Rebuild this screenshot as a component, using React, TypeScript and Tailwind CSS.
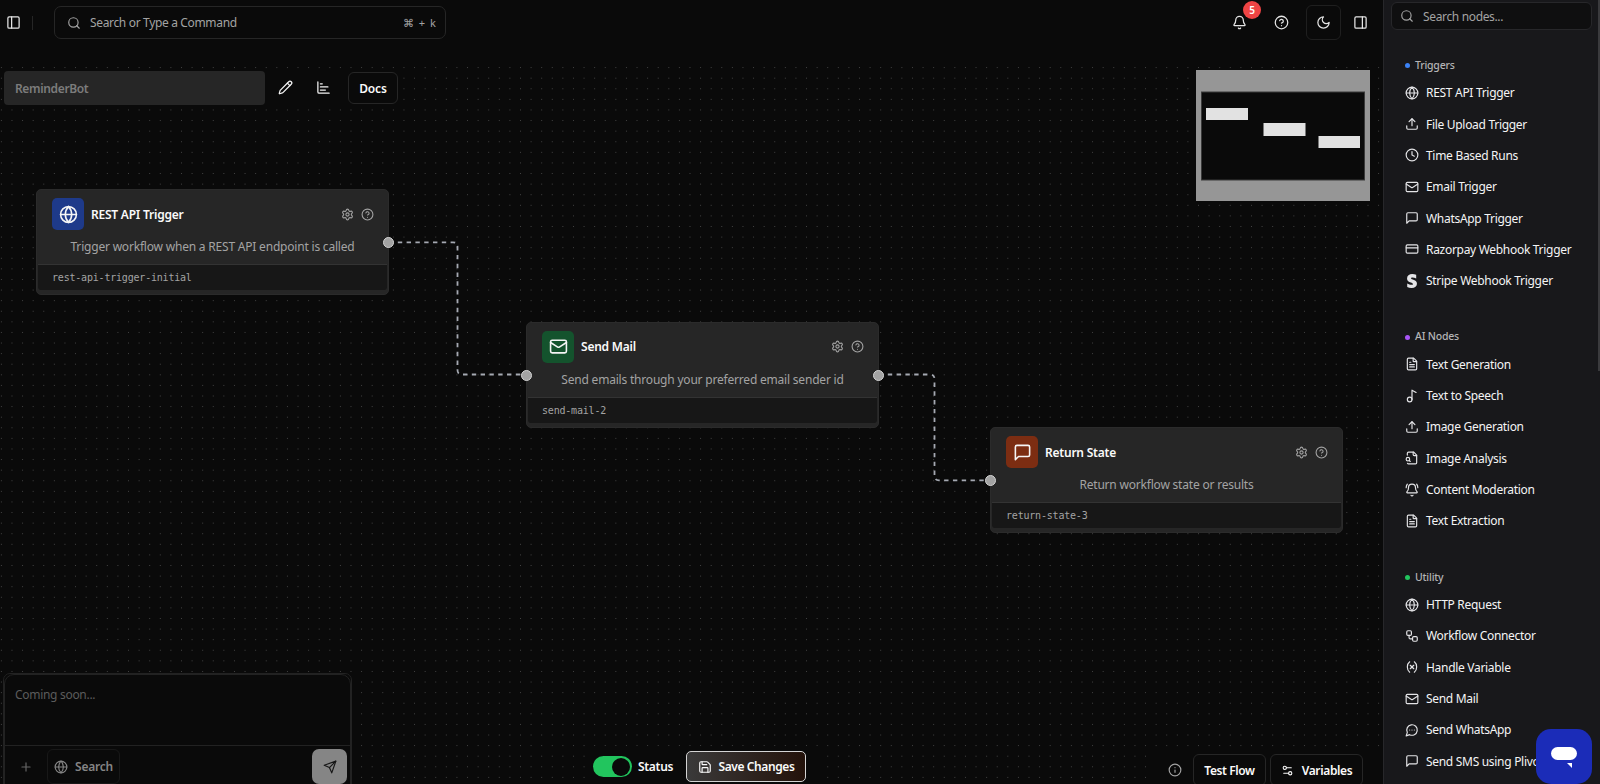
import type { ComponentType, ReactNode } from 'react';
import {
  PanelLeft, PanelRight, Search, Pencil, ChartBar, Bell, CircleHelp, Globe, Upload, Clock, Mail,
  CreditCard, FileText, Music2, BellRing, Workflow, Variable, Info, Settings2, Save, Plus, Settings,
} from 'lucide-react';
import { FaStripeS } from 'react-icons/fa';

type IconType = ComponentType<{ className?: string }>;

function Stroke({ className, children }: { className?: string; children: ReactNode }) {
  return (
    <svg className={className} viewBox="0 0 24 24" fill="none" stroke="currentColor" strokeWidth="2" strokeLinecap="round" strokeLinejoin="round">
      {children}
    </svg>
  );
}

function MessageSquare({ className }: { className?: string }) {
  return (
    <Stroke className={className}>
      <path d="M21 15a2 2 0 0 1-2 2H7l-4 4V5a2 2 0 0 1 2-2h14a2 2 0 0 1 2 2z" />
    </Stroke>
  );
}

function MessageCircle({ className }: { className?: string }) {
  return (
    <Stroke className={className}>
      <path d="M7.900 20A9 9 0 1 0 4 16.100L2 22Z" />
      <path d="M8 12h.01M12 12h.01M16 12h.01" />
    </Stroke>
  );
}

function FileSearch({ className }: { className?: string }) {
  return (
    <Stroke className={className}>
      <path d="M14 2v4a2 2 0 0 0 2 2h4" />
      <path d="M4.268 21a2 2 0 0 0 1.727 1H18a2 2 0 0 0 2-2V7l-5-5H6a2 2 0 0 0-2 2v3" />
      <path d="m9 18-1.500-1.500" />
      <circle cx="5" cy="14" r="3" />
    </Stroke>
  );
}

function Moon({ className }: { className?: string }) {
  return (
    <Stroke className={className}>
      <path d="M12 3a6 6 0 0 0 9 9 9 9 0 1 1-9-9Z" />
    </Stroke>
  );
}

function Send({ className }: { className?: string }) {
  return (
    <Stroke className={className}>
      <path d="m22 2-7 20-4-9-9-4Z" />
      <path d="M22 2 11 13" />
    </Stroke>
  );
}

const groups: { title: string; dot: string; items: [IconType, string][] }[] = [
  {
    title: 'Triggers',
    dot: 'bg-[#3b82f6]',
    items: [
      [Globe, 'REST API Trigger'],
      [Upload, 'File Upload Trigger'],
      [Clock, 'Time Based Runs'],
      [Mail, 'Email Trigger'],
      [MessageSquare, 'WhatsApp Trigger'],
      [CreditCard, 'Razorpay Webhook Trigger'],
      [FaStripeS, 'Stripe Webhook Trigger'],
    ],
  },
  {
    title: 'AI Nodes',
    dot: 'bg-[#a855f7]',
    items: [
      [FileText, 'Text Generation'],
      [Music2, 'Text to Speech'],
      [Upload, 'Image Generation'],
      [FileSearch, 'Image Analysis'],
      [BellRing, 'Content Moderation'],
      [FileText, 'Text Extraction'],
    ],
  },
  {
    title: 'Utility',
    dot: 'bg-[#22c55e]',
    items: [
      [Globe, 'HTTP Request'],
      [Workflow, 'Workflow Connector'],
      [Variable, 'Handle Variable'],
      [Mail, 'Send Mail'],
      [MessageCircle, 'Send WhatsApp'],
      [MessageSquare, 'Send SMS using Plivo'],
    ],
  },
];

function Handle({ className }: { className: string }) {
  return <span className={`absolute top-[47px] size-[11px] rounded-full border border-[#d4d4d4] bg-[#a3a3a3] ${className}`} />;
}

function FlowNode({ place, color, icon: Icon, title, text, id, left, right }: {
  place: string; color: string; icon: IconType; title: string; text: string; id: string; left?: boolean; right?: boolean;
}) {
  return (
    <div className={`absolute flex h-[106px] w-[353px] flex-col rounded-[5px] border border-[#2b2b2b] bg-[#262626] ${place}`}>
      <div className="flex h-[48px] items-center pr-[14px] pl-[15px]">
        <span className={`flex size-8 items-center justify-center rounded-[5px] ${color}`}>
          <Icon className="size-[19px] text-[#f5f5f5]" />
        </span>
        <span className="ml-[7px] pt-px text-[12px] font-semibold tracking-[-0.22px] text-[#fafafa]">{title}</span>
        <Settings className="ml-auto size-[13px] text-[#a3a3a3]" />
        <CircleHelp className="ml-[7px] size-[13px] text-[#a3a3a3]" />
      </div>
      <div className="flex h-[26px] items-start justify-center text-[12px] leading-[17px] tracking-[-0.2px] text-[#a3a3a3]">{text}</div>
      <div className="mx-px flex h-[26px] items-center rounded-b-[3px] border-t border-[#333] bg-[#171717] pl-[14px] text-[#a3a3a3]">
        <span className="font-['DejaVu_Sans_Mono',monospace] text-[10px] tracking-[-0.2px]">{id}</span>
      </div>
      {left && <Handle className="-left-[6px]" />}
      {right && <Handle className="-right-[6px]" />}
    </div>
  );
}

function OutlineButton({ className, children }: { className: string; children: ReactNode }) {
  return (
    <button className={`flex shrink-0 items-center justify-center rounded-[6px] border border-[#262626] bg-[#0a0a0a] text-[12px] font-semibold text-[#fafafa] ${className}`}>
      {children}
    </button>
  );
}

export default function App() {
  return (
    <div className="flex h-[784px] w-[1600px] overflow-hidden bg-[#0a0a0a] font-['Noto_Sans','Open_Sans',sans-serif] text-[12px] text-[#fafafa]">
      <main className="flex w-[1383px] shrink-0 flex-col">
        <header className="flex h-[64px] shrink-0 items-start">
          <div className="flex h-[45px] w-full items-center pr-[15px] pl-[6px]">
            <PanelLeft className="size-[15px] text-[#e5e5e5]" />
            <span className="ml-[11px] h-[14px] w-px bg-[#262626]" />
            <div className="ml-[21px] flex h-[33px] w-[392px] items-center rounded-[7px] border border-[#262626] pr-[9px] pl-[12px]">
              <Search className="size-[14px] text-[#a3a3a3]" />
              <span className="ml-[9px] pt-px text-[12px] tracking-[-0.34px] text-[#a3a3a3]">Search or Type a Command</span>
              <span className="ml-auto pt-px text-[11px] tracking-[0.1px] text-[#a3a3a3] [word-spacing:2px]">⌘ + k</span>
            </div>
            <div className="ml-auto flex items-center">
              <div className="relative">
                <Bell className="size-[15px] text-[#e5e5e5]" />
                <span className="absolute -top-[14px] left-[11px] flex size-[18px] items-center justify-center rounded-full bg-[#ef4444] text-[10px] font-semibold text-white">5</span>
              </div>
              <CircleHelp className="ml-[27px] size-[15px] text-[#e5e5e5]" />
              <span className="ml-[17px] flex size-[35px] items-center justify-center rounded-[6px] border border-[#1f1f1f]">
                <Moon className="size-[15px] text-[#e5e5e5]" />
              </span>
              <PanelRight className="ml-[12px] size-[15px] text-[#e5e5e5]" />
            </div>
          </div>
        </header>

        <section className="relative flex flex-1 flex-col justify-between">
          <svg className="absolute inset-0 h-full w-full">
            <defs>
              <pattern id="dots" x="0.9" y="3.1" width="10.594" height="10.594" patternUnits="userSpaceOnUse">
                <circle cx="0.44" cy="0.44" r="0.44" fill="#777" />
              </pattern>
            </defs>
            <rect width="100%" height="100%" fill="url(#dots)" />
            <g fill="none" stroke="#a5a9b2" strokeWidth="1.8" strokeDasharray="4.4 4.4">
              <path d="M389 178.300H453Q457.500 178.300 457.500 183V306Q457.500 310.500 462 310.500H526" />
              <path d="M879 310.500H930Q934.500 310.500 934.500 315V412Q934.500 416.300 939 416.300H990" />
            </g>
          </svg>

          <FlowNode place="left-[36px] top-[125px]" color="bg-[#1e3a8a]" icon={Globe} title="REST API Trigger" text="Trigger workflow when a REST API endpoint is called" id="rest-api-trigger-initial" right />
          <FlowNode place="left-[526px] top-[257.500px]" color="bg-[#14532d]" icon={Mail} title="Send Mail" text="Send emails through your preferred email sender id" id="send-mail-2" left right />
          <FlowNode place="left-[990px] top-[363px]" color="bg-[#7c2d12]" icon={MessageSquare} title="Return State" text="Return workflow state or results" id="return-state-3" left />

          <div className="relative flex items-start justify-between pt-[6px] pr-[13px] pl-[4px]">
            <div className="flex h-[35px] items-center bg-[#0a0a0a]">
              <div className="flex h-[34px] w-[261px] items-center rounded-[4px] bg-[#262626] pt-[3px] pl-[11px] text-[12px] font-semibold tracking-[-0.35px] text-[#7c7c7c]">ReminderBot</div>
              <Pencil className="ml-[13px] size-[15px] text-[#f5f5f5]" />
              <ChartBar className="ml-[23px] size-[15px] text-[#f5f5f5]" />
              <OutlineButton className="ml-[17px] h-[32px] w-[50px] pt-[2px] tracking-[-0.1px]">Docs</OutlineButton>
            </div>
            <svg width="174" height="131" viewBox="0 0 174 131">
              <rect width="174" height="131" fill="#969696" />
              <rect x="5.500" y="22" width="163" height="88" fill="#0a0a0a" stroke="#3a3a3a" />
              <g fill="#e2e2e2">
                <rect x="10" y="38" width="42" height="12" />
                <rect x="67.500" y="53" width="42" height="13" />
                <rect x="122.500" y="66" width="41.500" height="12" />
              </g>
            </svg>
          </div>

          <div className="relative flex h-[111px] items-end">
            <div className="ml-[3px] h-[111px] w-[352px] overflow-hidden">
              <div className="flex h-[130px] w-[349px] flex-col rounded-[7px] border border-[#222] bg-[#0a0a0a]">
                <div className="flex flex-1 flex-col rounded-[10px] border border-[#222]">
                  <div className="h-[71px] border-b border-[#222] px-[10px] pt-[11px] text-[12px] tracking-[-0.3px] text-[#5c5c5c]">Coming soon...</div>
                  <div className="flex items-center pt-[3px] pr-[3px] pl-[14px] text-[#858585]">
                    <Plus className="size-[14px] text-[#666]" />
                    <div className="ml-[14px] flex h-[35px] w-[73px] items-center justify-center gap-[7px] rounded-[6px] border border-[#181818]">
                      <Globe className="size-[14px]" />
                      <span className="text-[12px] font-semibold tracking-[-0.25px]">Search</span>
                    </div>
                    <span className="ml-auto flex size-[35px] items-center justify-center rounded-[7px] bg-[#858585]">
                      <Send className="size-[14px] text-[#171717]" />
                    </span>
                  </div>
                </div>
              </div>
            </div>
            <div className="ml-[232px] flex h-[38px] w-[231px] items-start bg-[#0a0a0a] pl-[6px]">
              <span className="mt-[10px] flex h-[21px] w-[39px] items-center justify-end rounded-full bg-[#22c55e] pr-[2px]">
                <span className="size-[18px] rounded-full bg-[#0a0a0a]" />
              </span>
              <span className="mt-[12px] ml-[6px] w-[36px] text-[12px] leading-[18px] font-semibold tracking-[-0.3px]">Status</span>
              <button className="mt-[5px] ml-[12px] flex h-[31px] w-[120px] shrink-0 items-center justify-center gap-[7px] rounded-[5px] border border-[#d4d4d4] bg-linear-to-r from-[#3a3a3a] to-[#23120a] text-[12px] font-semibold tracking-[-0.4px]">
                <Save className="size-[14px]" />
                <span className="pt-px">Save Changes</span>
              </button>
            </div>
            <div className="ml-auto flex h-[36px] w-[230px] items-start bg-[#0a0a0a] pl-[15px]">
              <Info className="mt-[15px] size-[14px] text-[#a3a3a3]" />
              <OutlineButton className="mt-[6px] ml-[11px] h-[32px] w-[73px] pt-[2px] tracking-[-0.4px]">Test Flow</OutlineButton>
              <OutlineButton className="mt-[6px] ml-[4px] h-[32px] w-[93px] gap-[8px] tracking-[-0.35px]">
                <Settings2 className="size-[13px]" />
                <span className="pt-px">Variables</span>
              </OutlineButton>
            </div>
          </div>
        </section>
      </main>

      <aside className="relative flex flex-1 flex-col border-l border-[#27272a] bg-[#18181b]">
        <div className="mt-[2px] ml-[7px] flex h-[28px] w-[201px] shrink-0 items-center rounded-[6px] border border-[#27272a] bg-[#0f0f10] pl-[8px]">
          <Search className="size-[14px] text-[#a3a3a3]" />
          <span className="ml-[9px] pt-[2px] text-[12px] tracking-[-0.35px] text-[#a3a3a3]">Search nodes...</span>
        </div>
        <div className="mt-[24.500px] flex flex-col gap-[29.700px] pl-[21px]">
          {groups.map((g) => (
            <div key={g.title}>
              <div className="flex h-[22.500px] items-center gap-[5px] text-[10.5px] font-medium tracking-[-0.2px] text-[#b4b4b6]">
                <span className={`size-[5px] rounded-full ${g.dot}`} />
                {g.title}
              </div>
              {g.items.map(([Icon, label]) => (
                <div key={label} className="flex h-[31.350px] items-center gap-[7px] text-[12px] tracking-[-0.3px] whitespace-nowrap text-[#f4f4f5]">
                  <Icon className="size-[14px] shrink-0 text-[#e4e4e7]" />
                  <span className="pt-px">{label}</span>
                </div>
              ))}
            </div>
          ))}
        </div>
        <span className="absolute top-0 right-0 h-[371px] w-[2px] bg-[#3a3a3d]" />
        <div className="absolute top-[729px] right-[8px] flex h-[55px] w-[56px] items-center justify-center rounded-[15px] bg-[#1b2cb8]">
          <svg width="28" height="23" viewBox="0 0 28 23" fill="#fff">
            <rect x="1" y="2" width="26" height="13" rx="6.500" />
            <path d="M17 18h5v5z" />
          </svg>
        </div>
      </aside>
    </div>
  );
}
